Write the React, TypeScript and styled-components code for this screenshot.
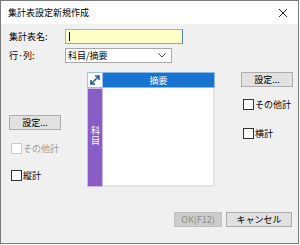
import React from 'react';
import styled, { createGlobalStyle } from 'styled-components';

const GlobalStyle = createGlobalStyle`
  html, body {
    margin: 0;
    padding: 0;
    background: #ffffff;
  }
  * {
    box-sizing: border-box;
  }
`;

const Window = styled.div`
  width: 299px;
  height: 244px;
  border: 1px solid #7a7a7a;
  background: #f0f0f0;
  display: flex;
  flex-direction: column;
  font-family: "Noto Sans CJK JP", "Noto Sans", sans-serif;
  font-size: 9px;
  color: #000;
`;

const TitleBar = styled.div`
  height: 23px;
  background: #ffffff;
  display: flex;
  align-items: center;
  justify-content: space-between;
  padding: 0 10px 0 7px;
  font-size: 9px;
`;

const CloseIcon = styled.svg`
  width: 10px;
  height: 10px;
`;

const Body = styled.div`
  flex: 1;
  display: flex;
  flex-direction: column;
  padding: 5px 6px 0 8px;
`;

const FormRow = styled.div<{ $mt?: number }>`
  display: flex;
  align-items: center;
  height: 15px;
  margin-top: ${p => p.$mt ?? 0}px;
`;

const Label = styled.span`
  width: 56px;
`;

const NameInput = styled.div`
  width: 118px;
  height: 15px;
  background: #ffffc8;
  border: 1px solid #e0b030;
  border-right-color: #4f7fa6;
  border-bottom-color: #c8a040;
  display: flex;
  align-items: center;
  padding-left: 3px;
`;

const Caret = styled.span`
  width: 1px;
  height: 9px;
  background: #000;
`;

const Select = styled.div`
  width: 107px;
  height: 15px;
  background: #fff;
  border: 1px solid #a8a8a8;
  display: flex;
  align-items: center;
  justify-content: space-between;
  padding: 0 5px 0 2px;
`;

const Middle = styled.div`
  display: grid;
  grid-template-columns: 52px 128px 52px;
  column-gap: 26px;
  margin-top: 9px;
  height: 116px;
`;

const SideColumn = styled.div<{ $top: number }>`
  display: flex;
  flex-direction: column;
  padding-top: ${p => p.$top}px;
`;

const Button = styled.div<{ $disabled?: boolean; $w?: number }>`
  width: ${p => p.$w ?? 52}px;
  height: 15px;
  background: ${p => (p.$disabled ? '#cccccc' : '#e1e1e1')};
  border: 1px solid ${p => (p.$disabled ? '#bfbfbf' : '#adadad')};
  color: ${p => (p.$disabled ? '#8f8f8f' : '#000')};
  display: flex;
  align-items: center;
  justify-content: center;
  font-size: 9px;
`;

const Check = styled.label<{ $disabled?: boolean; $mt: number }>`
  display: flex;
  align-items: center;
  gap: 1px;
  margin-top: ${p => p.$mt}px;
  margin-left: 2px;
  color: ${p => (p.$disabled ? '#9a9a9a' : '#000')};
`;

const Box = styled.span<{ $disabled?: boolean }>`
  width: 11px;
  height: 11px;
  background: #fff;
  border: 1px solid ${p => (p.$disabled ? '#cccccc' : '#333333')};
`;

const Table = styled.div`
  display: grid;
  grid-template-columns: 16px 1fr;
  grid-template-rows: 16px 1fr;
  width: 128px;
  height: 115px;
`;

const Corner = styled.div`
  background: #ffffff;
  border: 1px solid #9cc3e8;
  display: flex;
  align-items: center;
  justify-content: center;
`;

const ColHeader = styled.div`
  background: #1874d2;
  border: 1px solid #8ab8e8;
  border-left: none;
  color: #fff;
  display: flex;
  align-items: center;
  justify-content: center;
`;

const RowHeader = styled.div`
  background: #8a5cc6;
  border: 1px solid #cdb8ea;
  color: #fff;
  display: flex;
  justify-content: center;
  padding-top: 37px;
`;

const VerticalText = styled.span`
  writing-mode: vertical-rl;
  text-orientation: upright;
  line-height: 12px;
  letter-spacing: 1px;
`;

const Cells = styled.div`
  background: #ffffff;
  border-right: 2px solid #e2e2e2;
  border-bottom: 2px solid #e2e2e2;
`;

const Footer = styled.div`
  display: flex;
  justify-content: flex-end;
  gap: 4px;
  margin-top: 24px;
`;

export default function App() {
  return (
    <>
      <GlobalStyle />
      <Window>
        <TitleBar>
          <span>集計表設定新規作成</span>
          <CloseIcon viewBox="0 0 10 10">
            <path d="M1 1 L9 9 M9 1 L1 9" stroke="#222" strokeWidth="1" />
          </CloseIcon>
        </TitleBar>
        <Body>
          <FormRow>
            <Label>集計表名:</Label>
            <NameInput>
              <Caret />
            </NameInput>
          </FormRow>
          <FormRow $mt={4}>
            <Label>行·列:</Label>
            <Select>
              <span>科目/摘要</span>
              <svg width="8" height="5" viewBox="0 0 8 5">
                <path d="M0.5 0.5 L4 4 L7.5 0.5" fill="none" stroke="#444" strokeWidth="1" />
              </svg>
            </Select>
          </FormRow>
          <Middle>
            <SideColumn $top={43}>
              <Button>設定...</Button>
              <Check $disabled $mt={12}>
                <Box $disabled />
                その他計
              </Check>
              <Check $mt={14}>
                <Box />
                縦計
              </Check>
            </SideColumn>
            <Table>
              <Corner>
                <svg width="12" height="12" viewBox="0 0 12 12">
                  <path
                    d="M2 10 L10 2 M6 2 L10 2 L10 6 M2 6 L2 10 L6 10"
                    fill="none"
                    stroke="#1f5fa8"
                    strokeWidth="1.6"
                  />
                </svg>
              </Corner>
              <ColHeader>摘要</ColHeader>
              <RowHeader>
                <VerticalText>科目</VerticalText>
              </RowHeader>
              <Cells />
            </Table>
            <SideColumn $top={0}>
              <Button>設定...</Button>
              <Check $mt={11}>
                <Box />
                その他計
              </Check>
              <Check $mt={16}>
                <Box />
                横計
              </Check>
            </SideColumn>
          </Middle>
          <Footer>
            <Button $disabled $w={48}>OK(F12)</Button>
            <Button $w={66}>キャンセル</Button>
          </Footer>
        </Body>
      </Window>
    </>
  );
}
